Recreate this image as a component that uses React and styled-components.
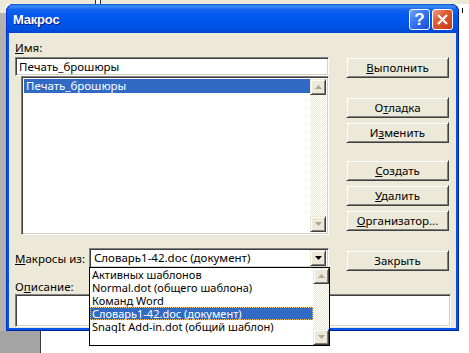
import React from "react";
import styled, { createGlobalStyle, css } from "styled-components";

const GlobalStyle = createGlobalStyle`
  html, body { margin: 0; padding: 0; background: #fff; overflow: hidden; }
  #root { width: 469px; height: 353px; }
`;

const sunken = css`
  box-sizing: border-box;
  border: 1px solid;
  border-color: #808080 #fff #fff #808080;
  box-shadow: inset 1px 1px #404040, inset -1px -1px #d4d0c8;
  background: #fff;
`;

const raised = css`
  box-sizing: border-box;
  background: #ece9d8;
  border: 1px solid;
  border-color: #ece9d8 #404040 #404040 #ece9d8;
  box-shadow: inset 1px 1px #fff, inset -1px -1px #808080;
`;

const Page = styled.div`
  width: 469px;
  height: 353px;
  display: flex;
  flex-direction: column;
  overflow: hidden;
  font-family: "Noto Sans", "DejaVu Sans", sans-serif;
  font-size: 11.5px;
  color: #000;
`;

const TopStrip = styled.div`
  height: 4px;
  flex: none;
  display: flex;
  background: #ece9d8;
`;

const TinyBox = styled.span`
  margin-left: 95px;
  width: 4px;
  height: 4px;
  border: 1px solid #333;
  border-top: none;
  background: #fff;
`;

const MiddleRow = styled.div`
  height: 327px;
  flex: none;
  display: flex;
`;

const LeftStrip = styled.div`
  width: 6px;
  background: linear-gradient(#ece9d8 0 9px, #b4b2ae 9px);
`;

const RightStrip = styled.div`
  flex: 1;
  background: #fff;
  padding: 4px 0 0 3px;
`;

const Tick = styled.div`
  width: 1px;
  height: 5px;
  background: #000;
`;

const BottomRow = styled.div`
  flex: 1;
  display: flex;
  background: #fff;
`;

const GrayBlock = styled.div`
  width: 40px;
  background: #a4a4a4;
  border-right: 1px solid #3a3a3a;
`;

const Dialog = styled.div`
  width: 453px;
  display: flex;
  flex-direction: column;
  border-radius: 8px 8px 0 0;
  background: #0055e5;
  position: relative;
`;

const TitleBar = styled.div`
  height: 29px;
  flex: none;
  box-sizing: border-box;
  display: flex;
  align-items: center;
  padding: 2px 6px 0 7px;
  border-radius: 8px 8px 0 0;
  background: linear-gradient(
    #0a5ed8 0%,
    #3d8cf5 8%,
    #1665ef 18%,
    #0058ee 40%,
    #0055e8 70%,
    #0050e0 88%,
    #0043cf 100%
  );
  box-shadow: inset 1px 0 #0831d9, inset -1px 0 #001ea0;
`;

const Title = styled.div`
  flex: 1;
  color: #fff;
  font-family: "Liberation Sans", Arial, sans-serif;
  font-weight: bold;
  font-size: 13px;
  letter-spacing: -0.2px;
  text-shadow: 1px 1px 0 #0a1883;
`;

const CaptionButtons = styled.div`
  display: flex;
  gap: 2px;
`;

const CaptionButton = styled.div`
  width: 21px;
  height: 21px;
  box-sizing: border-box;
  border: 1px solid #fff;
  border-radius: 3px;
  display: flex;
  align-items: center;
  justify-content: center;
  color: #fff;
  font-family: "Liberation Sans", Arial, sans-serif;
  font-weight: bold;
  font-size: 17px;
  background: ${(p) =>
    p.$close
      ? "linear-gradient(135deg, #f0a088 0%, #e2603a 35%, #d24a22 70%, #c0381a 100%)"
      : "linear-gradient(135deg, #7aa9f9 0%, #3f7cf2 35%, #2660e6 70%, #1c4fd0 100%)"};
`;

const Frame = styled.div`
  flex: 1;
  min-height: 0;
  display: flex;
  padding: 0 3px 3px;
  background: #0055e5;
  box-shadow: inset 1px 0 #0831d9, inset -1px 0 #001ea0, inset 0 -1px #001ea0;
`;

const Client = styled.div`
  flex: 1;
  position: relative;
  background: #ece9d8;
  display: grid;
  grid-template-columns: 314px 103px;
  column-gap: 17px;
  align-content: start;
  align-items: start;
  padding: 8px 7px 0 6px;
`;

const LeftCol = styled.div`
  display: flex;
  flex-direction: column;
`;

const RightCol = styled.div`
  display: flex;
  flex-direction: column;
  padding-top: 16px;
`;

const Label = styled.div`
  height: 14px;
  line-height: 14px;
  margin-top: ${(p) => p.$top || 0}px;
`;

const TextField = styled.div`
  ${sunken};
  height: 19px;
  margin-top: 2px;
  padding: 0 3px;
  line-height: 17px;
`;

const ListBox = styled.div`
  ${sunken};
  height: 159px;
  margin-left: 6px;
  padding: 2px;
  display: flex;
`;

const ListItems = styled.div`
  flex: 1;
`;

const ListRow = styled.div`
  height: 14px;
  line-height: 14px;
  padding-left: 2px;
  background: ${(p) => (p.$selected ? "#316ac5" : "transparent")};
  color: ${(p) => (p.$selected ? "#fff" : "#000")};
`;

const ScrollBar = styled.div`
  width: 16px;
  display: flex;
  flex-direction: column;
`;

const ScrollArrow = styled.div`
  ${raised};
  width: 16px;
  height: 16px;
  flex: none;
  display: flex;
  align-items: center;
  justify-content: center;
`;

const ScrollTrack = styled.div`
  flex: 1;
  background: repeating-conic-gradient(#ffffff 0 25%, #ece9d8 0 50%) 0 0 / 2px 2px;
`;

const MacroRow = styled.div`
  margin-top: 13px;
  height: 20px;
  display: flex;
  align-items: center;
`;

const RowLabel = styled.div`
  width: 74px;
`;

const Combo = styled.div`
  ${sunken};
  flex: 1;
  height: 20px;
  padding: 2px;
  display: flex;
  align-items: center;
`;

const ComboText = styled.div`
  flex: 1;
  padding-left: 2px;
  line-height: 16px;
`;

const Button = styled.button`
  ${raised};
  width: 103px;
  height: 21px;
  flex: none;
  padding: 0;
  margin: ${(p) => p.$space ?? 4}px 0 0;
  font: inherit;
  color: #000;
  text-align: center;
`;

const Description = styled.div`
  grid-column: 1 / -1;
`;

const DescBox = styled.div`
  ${sunken};
  height: 33px;
  width: 436px;
`;

const Popup = styled.div`
  position: absolute;
  left: 80px;
  top: 234px;
  width: 241px;
  height: 79px;
  box-sizing: border-box;
  border: 1px solid #000;
  background: #fff;
  display: flex;
  z-index: 2;
`;

const PopupItems = styled.div`
  flex: 1;
`;

const PopupRow = styled.div`
  height: 13px;
  padding-left: 2px;
  font-size: 11px;
  line-height: 13px;
  white-space: nowrap;
  overflow: hidden;
  background: ${(p) => (p.$selected ? "#316ac5" : "transparent")};
  color: ${(p) => (p.$selected ? "#fff" : "#000")};
  outline: ${(p) => (p.$selected ? "1px dotted #f2c46a" : "none")};
  outline-offset: -1px;
`;

const Arrow = ({ up, color = "#aca899" }) => (
  <svg width="7" height="4" viewBox="0 0 7 4">
    <polygon points={up ? "3.5,0 7,4 0,4" : "0,0 7,0 3.5,4"} fill={color} />
  </svg>
);

const Scroll = () => (
  <ScrollBar>
    <ScrollArrow>
      <Arrow up />
    </ScrollArrow>
    <ScrollTrack />
    <ScrollArrow>
      <Arrow />
    </ScrollArrow>
  </ScrollBar>
);

const sources = [
  "Активных шаблонов",
  "Normal.dot (общего шаблона)",
  "Команд Word",
  "Словарь1-42.doc (документ)",
  "SnagIt Add-in.dot (общий шаблон)",
];

export default function App() {
  return (
    <Page>
      <GlobalStyle />
      <TopStrip>
        <TinyBox />
      </TopStrip>
      <MiddleRow>
        <LeftStrip />
        <Dialog>
          <TitleBar>
            <Title>Макрос</Title>
            <CaptionButtons>
              <CaptionButton>?</CaptionButton>
              <CaptionButton $close>
                <svg width="11" height="11" viewBox="0 0 11 11">
                  <path d="M1 1 L10 10 M10 1 L1 10" stroke="#fff" strokeWidth="2.2" />
                </svg>
              </CaptionButton>
            </CaptionButtons>
          </TitleBar>
          <Frame>
            <Client>
              <LeftCol>
                <Label>
                  <u>И</u>мя:
                </Label>
                <TextField>Печать_брошюры</TextField>
                <ListBox>
                  <ListItems>
                    <ListRow $selected>Печать_брошюры</ListRow>
                  </ListItems>
                  <Scroll />
                </ListBox>
                <MacroRow>
                  <RowLabel>
                    <u>М</u>акросы из:
                  </RowLabel>
                  <Combo>
                    <ComboText>Словарь1-42.doc (документ)</ComboText>
                    <ScrollArrow>
                      <Arrow color="#000" />
                    </ScrollArrow>
                  </Combo>
                </MacroRow>
              </LeftCol>
              <RightCol>
                <Button $space={0}>
                  <u>В</u>ыполнить
                </Button>
                <Button $space={19}>
                  О<u>т</u>ладка
                </Button>
                <Button>
                  И<u>з</u>менить
                </Button>
                <Button $space={17}>
                  <u>С</u>оздать
                </Button>
                <Button>
                  <u>У</u>далить
                </Button>
                <Button>
                  <u>О</u>рганизатор...
                </Button>
                <Button $space={19}>Закрыть</Button>
              </RightCol>
              <Description>
                <Label $top={9}>
                  О<u>п</u>исание:
                </Label>
                <DescBox />
              </Description>
              <Popup>
                <PopupItems>
                  {sources.map((s, i) => (
                    <PopupRow key={s} $selected={i === 3}>
                      {s}
                    </PopupRow>
                  ))}
                </PopupItems>
                <Scroll />
              </Popup>
            </Client>
          </Frame>
        </Dialog>
        <RightStrip>
          <Tick />
        </RightStrip>
      </MiddleRow>
      <BottomRow>
        <GrayBlock />
      </BottomRow>
    </Page>
  );
}
